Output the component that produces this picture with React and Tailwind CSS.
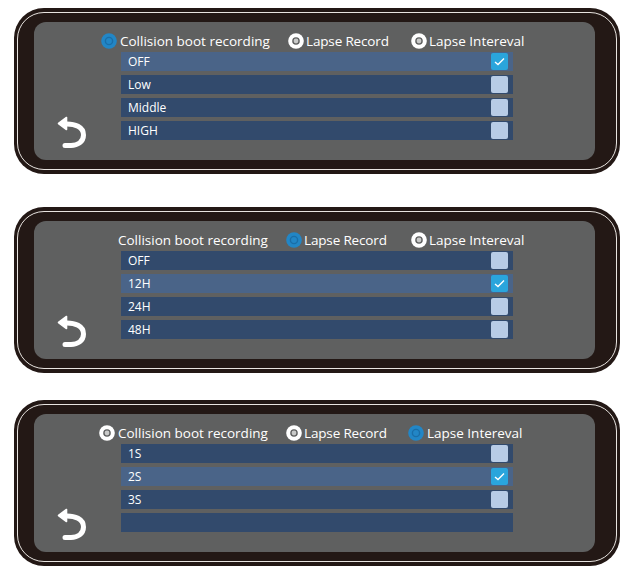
import React from 'react';

const PANELS = [
  {
    tabs: [
      { label: 'Collision boot recording', state: 'active', className: 'ml-[67px]', labelClass: 'ml-[3px] w-[150px]' },
      { label: 'Lapse Record', state: 'idle', className: 'ml-[18px]', labelClass: 'ml-[2px] w-[83px] tracking-[-0.15px]' },
      { label: 'Lapse Intereval', state: 'idle', className: 'ml-[22px]', labelClass: 'ml-[2px]' },
    ],
    rows: ['OFF', 'Low', 'Middle', 'HIGH'],
    selected: 0,
    className: 'mt-[8px]',
  },
  {
    tabs: [
      { label: 'Collision boot recording', state: 'none', className: 'ml-[84px]', labelClass: 'w-[150px]' },
      { label: 'Lapse Record', state: 'active', className: 'ml-[18px]', labelClass: 'ml-[2px] w-[83px] tracking-[-0.15px]' },
      { label: 'Lapse Intereval', state: 'idle', className: 'ml-[24px]', labelClass: 'ml-[2px]' },
    ],
    rows: ['OFF', '12H', '24H', '48H'],
    selected: 1,
    className: 'mt-[33px]',
  },
  {
    tabs: [
      { label: 'Collision boot recording', state: 'idle', className: 'ml-[65px]', labelClass: 'ml-[3px] w-[150px]' },
      { label: 'Lapse Record', state: 'idle', className: 'ml-[18px]', labelClass: 'ml-[2px] w-[83px] tracking-[-0.15px]' },
      { label: 'Lapse Intereval', state: 'active', className: 'ml-[21px]', labelClass: 'ml-[3px]' },
    ],
    rows: ['1S', '2S', '3S', ''],
    selected: 1,
    className: 'mt-[27px]',
  },
];

const TabMark = ({ state }) => {
  if (state === 'none') return null;
  if (state === 'active') {
    return (
      <svg width="16" height="16" viewBox="0 0 16 16" className="shrink-0">
        <circle cx="8" cy="8" r="7.8" fill="#2286c6" />
        <circle cx="8" cy="8" r="3.6" fill="none" stroke="#1a6ea8" strokeWidth="1.4" />
      </svg>
    );
  }
  return (
    <svg width="16" height="16" viewBox="0 0 16 16" className="shrink-0">
      <circle cx="8" cy="8" r="7.8" fill="#fff" />
      <circle cx="8" cy="8" r="3.8" fill="#5f6060" />
      <circle cx="8" cy="8" r="2.4" fill="#c9cac9" />
    </svg>
  );
};

const BackIcon = () => (
  <svg width="30" height="33" viewBox="0 0 30 33" fill="none">
    <path d="M8 8 C18 7.5 26.5 11 26.5 19 C26.5 26 20.5 29.5 14 29.5 H8" stroke="#fff" strokeWidth="5" strokeLinecap="round" />
    <path d="M9.5 1.5 L9.5 13.5 L1.5 7.5 Z" fill="#fff" stroke="#fff" strokeWidth="1.6" strokeLinejoin="round" />
  </svg>
);

const Row = ({ label, selected, last }) => {
  const hasBox = label !== '';
  return (
    <div className={`flex h-[19px] w-[392px] items-center justify-between pl-[7px] pr-[5px] text-[12px] text-white ${selected ? 'bg-[#4a6488]' : 'bg-[#324a6c]'} ${last ? '' : 'mb-[4px]'}`}>
      <span>{label}</span>
      {hasBox && (
        <span className={`flex h-[17px] w-[17px] items-center justify-center rounded-[2px] ${selected ? 'bg-[#2aa5dc]' : 'bg-[#b8cce6]'}`}>
          {selected && (
            <svg width="11" height="9" viewBox="0 0 11 9" fill="none">
              <path d="M1 5 L4 7.6 L10 1.6" stroke="#fff" strokeWidth="1.4" />
            </svg>
          )}
        </span>
      )}
    </div>
  );
};

const Panel = ({ tabs, rows, selected, className }) => (
  <section className={`ml-[14px] h-[166px] w-[606px] shrink-0 rounded-[30px] bg-[#231815] px-[3px] py-[4px] ${className}`}>
    <div className="h-full rounded-[27px] border border-[#e8e4e0] pl-[16px] pr-[21px] pt-[9px]">
      <div className="h-[138px] rounded-[12px] bg-[#5f6060]">
        <div className="flex h-[30px] items-center pt-[8px] text-[13.5px] text-white">
          {tabs.map((tab) => (
            <div key={tab.label} className={`flex shrink-0 items-center ${tab.className}`}>
              <TabMark state={tab.state} />
              <span className={`whitespace-nowrap ${tab.labelClass}`}>{tab.label}</span>
            </div>
          ))}
        </div>
        <div className="flex">
          <div className="flex w-[87px] shrink-0 items-end pl-[23px]">
            <BackIcon />
          </div>
          <div className="pb-[9px]">
            {rows.map((row, i) => (
              <Row key={i} label={row} selected={i === selected} last={i === rows.length - 1} />
            ))}
          </div>
        </div>
      </div>
    </div>
  </section>
);

export default function App() {
  return (
    <div className="flex h-[578px] w-[641px] flex-col overflow-hidden bg-white font-['Open_Sans',sans-serif]">
      {PANELS.map((panel, i) => (
        <Panel key={i} {...panel} />
      ))}
    </div>
  );
}
